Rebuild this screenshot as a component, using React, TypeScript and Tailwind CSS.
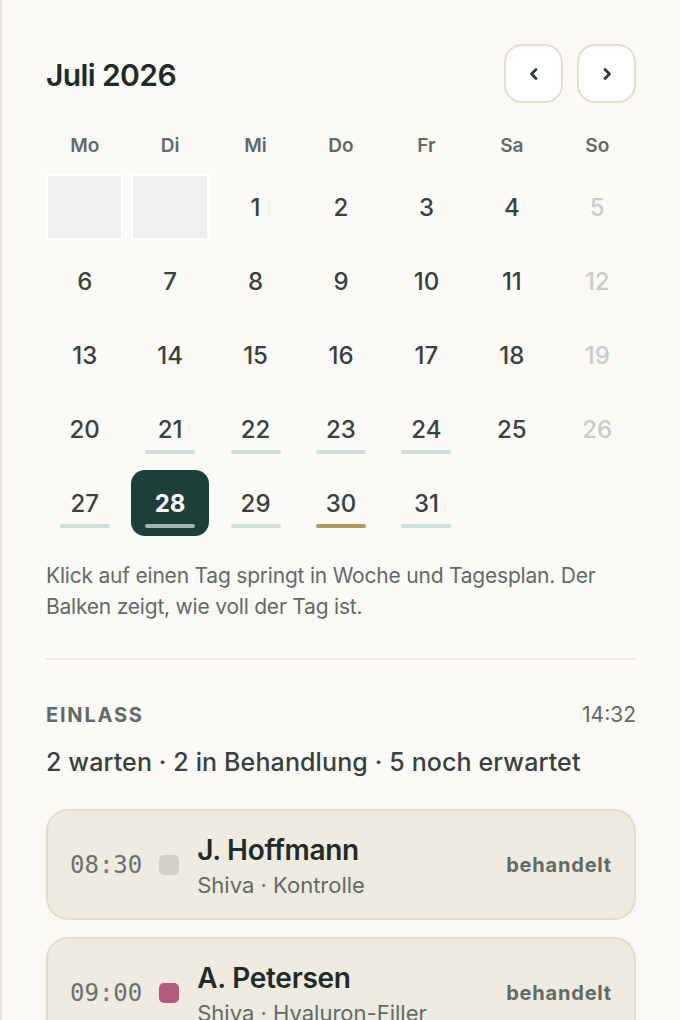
import React from "react";

type Day = { n: number | null; weekend?: boolean; bar?: "teal" | "gold" | "sel"; selected?: boolean };

const days: Day[] = [
  { n: null }, { n: null }, { n: 1 }, { n: 2 }, { n: 3 }, { n: 4 }, { n: 5, weekend: true },
  { n: 6 }, { n: 7 }, { n: 8 }, { n: 9 }, { n: 10 }, { n: 11 }, { n: 12, weekend: true },
  { n: 13 }, { n: 14 }, { n: 15 }, { n: 16 }, { n: 17 }, { n: 18 }, { n: 19, weekend: true },
  { n: 20 }, { n: 21, bar: "teal" }, { n: 22, bar: "teal" }, { n: 23, bar: "teal" }, { n: 24, bar: "teal" }, { n: 25 }, { n: 26, weekend: true },
  { n: 27, bar: "teal" }, { n: 28, bar: "sel", selected: true }, { n: 29, bar: "teal" }, { n: 30, bar: "gold" }, { n: 31, bar: "teal" },
];

const weekdays = ["Mo", "Di", "Mi", "Do", "Fr", "Sa", "So"];

function Cell({ d }: { d: Day }) {
  if (d.n === null) {
    return <div className="h-[66px] bg-[#efefef] border-2 border-white" />;
  }
  const base = "relative h-[66px] flex items-center justify-center rounded-[14px]";
  const cls = d.selected
    ? `${base} bg-[#1a4039] text-white font-bold`
    : d.weekend
    ? `${base} text-[#c7cdca] font-medium`
    : `${base} text-[#36423f] font-medium`;
  const barCls =
    d.bar === "gold"
      ? "bg-[#b8975a]"
      : d.bar === "sel"
      ? "bg-[#a9b5b0]"
      : "bg-[#cde0da]";
  return (
    <div className={cls}>
      <span className="text-[24px] leading-none pt-[2px]">{d.n}</span>
      {d.bar && (
        <span className={`absolute bottom-[8px] left-1/2 -translate-x-1/2 w-[50px] h-[4px] rounded-full ${barCls}`} />
      )}
    </div>
  );
}

function Visit({ time, color, name, sub }: { time: string; color: string; name: string; sub: string }) {
  return (
    <div className="flex items-center h-[111px] rounded-[22px] border-2 border-[#e4ddcc] bg-[#f0ebe1] px-[22px]">
      <span className="text-[24px] text-[#68726e]" style={{ fontFamily: '"DejaVu Sans Mono", monospace' }}>
        {time}
      </span>
      <span className="ml-[17px] w-[20px] h-[20px] rounded-[5px]" style={{ backgroundColor: color }} />
      <div className="ml-[18px] flex flex-col flex-1 min-w-0 pt-[2px]">
        <span className="text-[28px] leading-[34px] font-semibold text-[#1f2b28] tracking-[-0.01em]">{name}</span>
        <span className="mt-[4px] text-[22px] leading-[28px] text-[#5f6b67] whitespace-nowrap">{sub}</span>
      </div>
      <span className="text-[20px] font-bold text-[#5f6b67] tracking-[0.04em]">behandelt</span>
    </div>
  );
}

export default function App() {
  return (
    <div
      className="h-[1020px] overflow-hidden bg-[#fbfaf6] border-l-2 border-[#ece5d9] pl-[44px] pr-[44px] pt-[44px]"
      style={{ fontFamily: 'Inter, "Noto Sans", sans-serif' }}
    >
      <div className="flex items-center justify-between h-[59px]">
        <h1 className="text-[30px] font-semibold text-[#1f2b28] tracking-[-0.02em] pt-[3px]">Juli 2026</h1>
        <div className="flex gap-[14px]">
          <button className="w-[59px] h-[59px] rounded-[18px] border-2 border-[#e5dfcf] bg-white flex items-center justify-center text-[#2b3a36]">
            <svg width="12" height="14" viewBox="0 0 12 14" fill="none">
              <path d="M8 2.5 L3.5 7 L8 11.5" stroke="currentColor" strokeWidth="2.8" strokeLinecap="round" strokeLinejoin="round" />
            </svg>
          </button>
          <button className="w-[59px] h-[59px] rounded-[18px] border-2 border-[#e5dfcf] bg-white flex items-center justify-center text-[#2b3a36]">
            <svg width="12" height="14" viewBox="0 0 12 14" fill="none">
              <path d="M4 2.5 L8.5 7 L4 11.5" stroke="currentColor" strokeWidth="2.8" strokeLinecap="round" strokeLinejoin="round" />
            </svg>
          </button>
        </div>
      </div>

      <div className="grid grid-cols-7 gap-x-[8px] mt-[28px]">
        {weekdays.map((w) => (
          <div key={w} className="text-center text-[19px] leading-[28px] font-semibold text-[#5f6b67] pt-[1px]">
            {w}
          </div>
        ))}
      </div>

      <div className="grid grid-cols-7 gap-[8px] mt-[14px]">
        {days.map((d, i) => (
          <Cell key={i} d={d} />
        ))}
      </div>

      <p className="mt-[24px] text-[21px] leading-[31px] text-[#5f6b67] tracking-[-0.01em]">
        Klick auf einen Tag springt in Woche und Tagesplan. Der Balken zeigt, wie voll der Tag ist.
      </p>

      <div className="mt-[36px] h-[2px] bg-[#ede7dd]" />

      <div className="mt-[43px] flex items-center justify-between">
        <span className="text-[20px] leading-[24px] font-bold tracking-[0.09em] text-[#5f6b67]">EINLASS</span>
        <span className="text-[21px] leading-[24px] text-[#5f6b67]">14:32</span>
      </div>

      <div className="mt-[20px] text-[25px] leading-[30px] font-medium text-[#36423f] tracking-[0.005em]">
        2 warten · 2 in Behandlung · 5 noch erwartet
      </div>

      <div className="mt-[32px] flex flex-col gap-[17px]">
        <Visit time="08:30" color="#d3cfc4" name="J. Hoffmann" sub="Shiva · Kontrolle" />
        <Visit time="09:00" color="#b35a7d" name="A. Petersen" sub="Shiva · Hyaluron-Filler" />
      </div>
    </div>
  );
}
